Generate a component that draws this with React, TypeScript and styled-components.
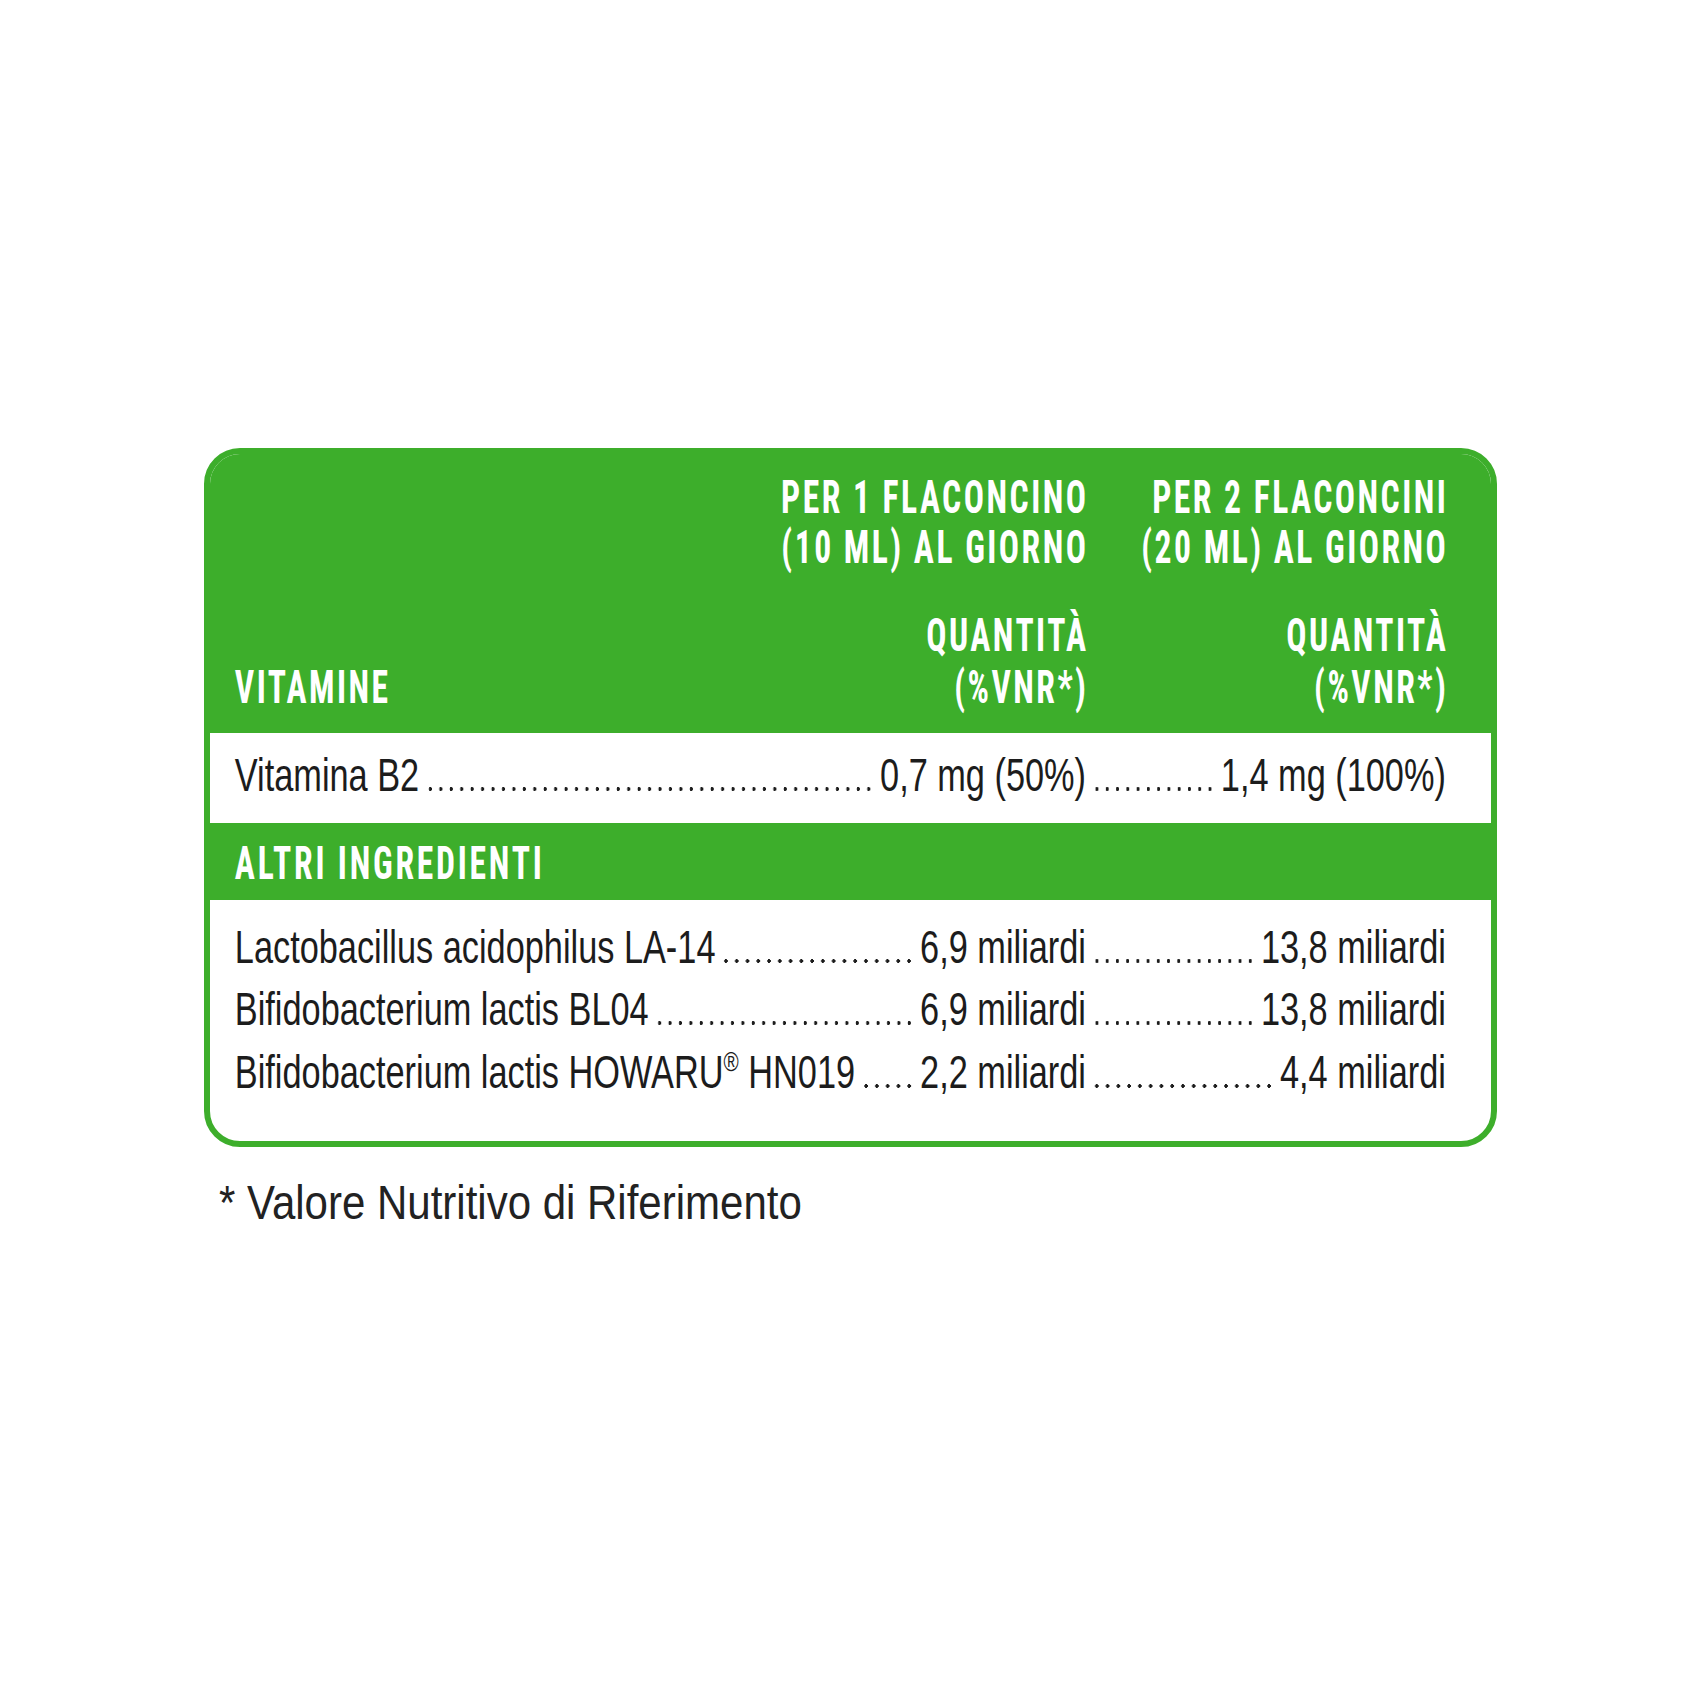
import styled, { createGlobalStyle } from 'styled-components';

const GREEN = '#3dae2b';
// the label uses a very narrow face; we squeeze a regular one to the same width
const SQUEEZE = 0.73;
const CARD_WIDTH = 1293;
const BORDER = 6;
const PRE_WIDTH = (CARD_WIDTH - BORDER * 2) / SQUEEZE;
const HEAD_TRACKING = 3.4;

const vitamins = [{ name: 'Vitamina B2', one: '0,7 mg (50%)', two: '1,4 mg (100%)' }];

const ingredients = [
  { name: 'Lactobacillus acidophilus LA-14', one: '6,9 miliardi', two: '13,8 miliardi' },
  { name: 'Bifidobacterium lactis BL04', one: '6,9 miliardi', two: '13,8 miliardi' },
  { name: 'Bifidobacterium lactis HOWARU', mark: true, suffix: ' HN019', one: '2,2 miliardi', two: '4,4 miliardi' },
];

const GlobalStyle = createGlobalStyle`
  body {
    margin: 0;
    background: #ffffff;
    font-family: "Liberation Sans", Arial, sans-serif;
  }
`;

const App = () => {
  return (
    <>
      <GlobalStyle />
      <Page>
        <Card>
          <Squeeze>
            <Header>
              <HeadRow $lh={50}>
                <HeadCell>
                  PER 1 FLACONCINO
                  <br />
                  (10 ML) AL GIORNO
                </HeadCell>
                <HeadCell>
                  PER 2 FLACONCINI
                  <br />
                  (20 ML) AL GIORNO
                </HeadCell>
              </HeadRow>
              <HeadRow $lh={52} $gap={37}>
                <HeadSplit>
                  <span>VITAMINE</span>
                  <HeadCell>
                    QUANTITÀ
                    <br />
                    (%VNR*)
                  </HeadCell>
                </HeadSplit>
                <HeadCell>
                  QUANTITÀ
                  <br />
                  (%VNR*)
                </HeadCell>
              </HeadRow>
            </Header>

            <VitaminBlock>
              {vitamins.map(item => (
                <Columns key={item.name}>
                  <Part>
                    <span>{item.name}</span>
                    <Leader />
                    <span>{item.one}</span>
                  </Part>
                  <Part>
                    <Leader />
                    <span>{item.two}</span>
                  </Part>
                </Columns>
              ))}
            </VitaminBlock>

            <Band>ALTRI INGREDIENTI</Band>

            <IngredientBlock>
              {ingredients.map(item => (
                <Columns key={item.name + item.one}>
                  <Part>
                    <span>
                      {item.name}
                      {item.mark && <Mark>®</Mark>}
                      {item.suffix}
                    </span>
                    <Leader />
                    <span>{item.one}</span>
                  </Part>
                  <Part>
                    <Leader />
                    <span>{item.two}</span>
                  </Part>
                </Columns>
              ))}
            </IngredientBlock>
          </Squeeze>
        </Card>

        <Footnote>
          <FootnoteText>* Valore Nutritivo di Riferimento</FootnoteText>
        </Footnote>
      </Page>
    </>
  );
};

export default App;

const Page = styled.div`
  width: 1700px;
  min-height: 1700px;
  box-sizing: border-box;
  padding: 448px 0 0 204px;
`;

const Card = styled.div`
  width: ${CARD_WIDTH}px;
  box-sizing: border-box;
  border: ${BORDER}px solid ${GREEN};
  border-radius: 36px;
  overflow: hidden;
  background: #ffffff;
`;

const Squeeze = styled.div`
  width: ${PRE_WIDTH}px;
  transform: scaleX(${SQUEEZE});
  transform-origin: left top;
`;

const Columns = styled.div`
  display: grid;
  grid-template-columns: 1166px 493px;
  padding: 0 62px 0 34px;
`;

const Header = styled.div`
  background: ${GREEN};
  color: #ffffff;
  padding: 18px 0 20px;

  font-family: "Roboto Condensed", "Liberation Sans", sans-serif;
  font-size: 46px;
  font-weight: 700;
  letter-spacing: ${HEAD_TRACKING}px;
`;

const HeadRow = styled(Columns)<{ $lh: number; $gap?: number }>`
  line-height: ${p => p.$lh}px;
  margin-top: ${p => p.$gap ?? 0}px;
`;

const HeadCell = styled.div`
  text-align: right;
  white-space: nowrap;
  align-self: end;
  margin-right: -${HEAD_TRACKING}px;
`;

const HeadSplit = styled.div`
  display: flex;
  justify-content: space-between;
  align-items: flex-end;
  white-space: nowrap;
`;

const VitaminBlock = styled.div`
  background: #ffffff;
  color: #1c1c1c;
  padding-bottom: 6px;

  font-size: 47px;
  line-height: 84px;
`;

const Part = styled.div`
  display: flex;
  align-items: baseline;
  white-space: nowrap;
`;

const Leader = styled.span`
  flex: 1;
  height: 4px;
  margin: 0 8px;
  background-image: radial-gradient(ellipse 2.6px 1.9px at center, #1c1c1c 90%, transparent 100%);
  background-size: 14px 4px;
  background-repeat: space no-repeat;
  background-position: left bottom;
`;

const Band = styled.div`
  background: ${GREEN};
  color: #ffffff;
  padding: 3px 0 0 34px;

  font-family: "Roboto Condensed", "Liberation Sans", sans-serif;
  font-size: 46px;
  font-weight: 700;
  line-height: 74px;
  letter-spacing: 3.8px;
`;

const IngredientBlock = styled.div`
  color: #1c1c1c;
  padding: 15.5px 0 38px;

  font-size: 47px;
  line-height: 62.5px;
`;

const Mark = styled.sup`
  font-size: 0.6em;
  vertical-align: 0.6em;
  line-height: 0;
`;

const Footnote = styled.p`
  margin: 28px 0 0 15px;
  color: #222222;
  font-size: 48px;
  line-height: 56px;
`;

const FootnoteText = styled.span`
  display: inline-block;
  transform: scaleX(0.875);
  transform-origin: left center;
  white-space: nowrap;
`;
